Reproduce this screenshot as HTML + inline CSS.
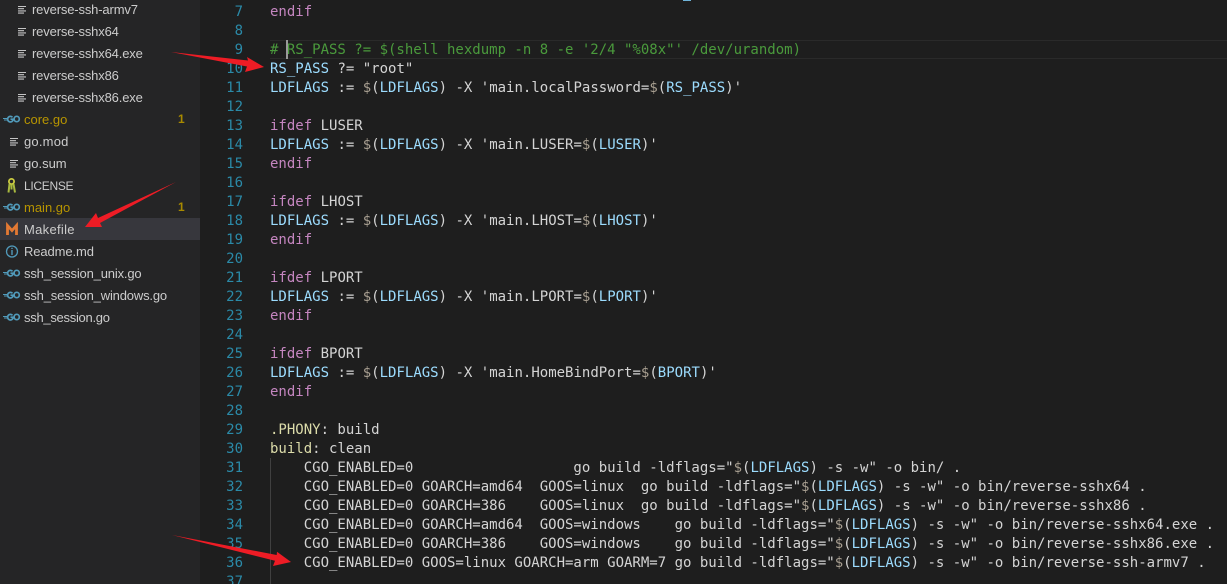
<!DOCTYPE html>
<html><head><meta charset="utf-8">
<style>
html,body{margin:0;padding:0;background:#1e1e1e;}
#root{position:relative;width:1227px;height:584px;overflow:hidden;background:#1e1e1e;}
#side{position:absolute;left:0;top:0;width:200px;height:584px;background:#252526;}
.row{position:absolute;left:0;width:200px;height:22px;font:13px/22px "Liberation Sans",sans-serif;color:#cccccc;white-space:pre;}
.row span.t{position:absolute;top:1px;}
.row.sel{background:#37373d;}
.y{color:#b89500 !important;}
.badge{position:absolute;left:178px;top:0;color:#a88a00;font-weight:bold;font-size:12px;}
.row svg{position:absolute;left:0;top:0;}
.ln{position:absolute;left:200px;width:43px;text-align:right;font:14px/19px "DejaVu Sans Mono",monospace;color:#2b8aa8;height:19px;margin-top:1px;}
.c{position:absolute;left:270px;font:14px/19px "DejaVu Sans Mono",monospace;color:#d4d4d4;white-space:pre;height:19px;margin-top:1px;}
.k{color:#c586c0}.v{color:#9cdcfe}.g{color:#a89f91}.cm{color:#4a9a3c}.f{color:#dcdcaa}
.r{letter-spacing:-.15px}.s{letter-spacing:-.17px}
</style></head><body><div id="root">
<div id="side">
<div class="row" style="top:-2px"><svg width="30" height="22"><path d="M18 8.500h8M18 10.700h6M18 12.900h8M18 15.100h6" stroke="#c5c5c5" stroke-width="1.1"/></svg><span class="t r" style="left:32px">reverse-ssh-armv7</span></div>
<div class="row" style="top:20px"><svg width="30" height="22"><path d="M18 8.500h8M18 10.700h6M18 12.900h8M18 15.100h6" stroke="#c5c5c5" stroke-width="1.1"/></svg><span class="t r" style="left:32px">reverse-sshx64</span></div>
<div class="row" style="top:42px"><svg width="30" height="22"><path d="M18 8.500h8M18 10.700h6M18 12.900h8M18 15.100h6" stroke="#c5c5c5" stroke-width="1.1"/></svg><span class="t r" style="left:32px">reverse-sshx64.exe</span></div>
<div class="row" style="top:64px"><svg width="30" height="22"><path d="M18 8.500h8M18 10.700h6M18 12.900h8M18 15.100h6" stroke="#c5c5c5" stroke-width="1.1"/></svg><span class="t r" style="left:32px">reverse-sshx86</span></div>
<div class="row" style="top:86px"><svg width="30" height="22"><path d="M18 8.500h8M18 10.700h6M18 12.900h8M18 15.100h6" stroke="#c5c5c5" stroke-width="1.1"/></svg><span class="t r" style="left:32px">reverse-sshx86.exe</span></div>
<div class="row" style="top:108px"><svg width="24" height="22"><path d="M3 10.500h4M4 12h3" stroke="#519aba" stroke-width="1"/><path d="M12.500 9.300A2.800 2.800 0 1 0 12.700 12.800V11.200H10.500" fill="none" stroke="#519aba" stroke-width="1.700"/><ellipse cx="16.700" cy="11" rx="2.600" ry="2.700" fill="none" stroke="#519aba" stroke-width="1.700"/></svg><span class="t y" style="left:24px">core.go</span><span class="badge">1</span></div>
<div class="row" style="top:130px"><svg width="30" height="22"><path d="M10 8.500h8M10 10.700h6M10 12.900h8M10 15.100h6" stroke="#c5c5c5" stroke-width="1.1"/></svg><span class="t" style="left:24px;letter-spacing:.2px">go.mod</span></div>
<div class="row" style="top:152px"><svg width="30" height="22"><path d="M10 8.500h8M10 10.700h6M10 12.900h8M10 15.100h6" stroke="#c5c5c5" stroke-width="1.1"/></svg><span class="t" style="left:24px">go.sum</span></div>
<div class="row" style="top:174px"><svg width="24" height="22"><circle cx="11.500" cy="7.500" r="2.600" fill="none" stroke="#cbcb41" stroke-width="1.800"/><path d="M9.500 10 8.500 18.500M13.500 10 15 18.500M11.500 10.500v5" stroke="#a9b93f" stroke-width="2"/></svg><span class="t" style="left:24px;font-size:12px;letter-spacing:-.3px">LICENSE</span></div>
<div class="row" style="top:196px"><svg width="24" height="22"><path d="M3 10.500h4M4 12h3" stroke="#519aba" stroke-width="1"/><path d="M12.500 9.300A2.800 2.800 0 1 0 12.700 12.800V11.200H10.500" fill="none" stroke="#519aba" stroke-width="1.700"/><ellipse cx="16.700" cy="11" rx="2.600" ry="2.700" fill="none" stroke="#519aba" stroke-width="1.700"/></svg><span class="t y" style="left:24px">main.go</span><span class="badge">1</span></div>
<div class="row sel" style="top:218px"><svg width="24" height="22"><path d="M7.500 17V7.500L12 12.500 16.500 7.500V17" fill="none" stroke="#e37933" stroke-width="2.800"/></svg><span class="t" style="left:24px;letter-spacing:.3px">Makefile</span></div>
<div class="row" style="top:240px"><svg width="24" height="22"><circle cx="12" cy="11.500" r="5.500" fill="none" stroke="#519aba" stroke-width="1.300"/><path d="M12 10V15M12 7.800v1.200" stroke="#519aba" stroke-width="1.400"/></svg><span class="t" style="left:24px;letter-spacing:-.1px">Readme.md</span></div>
<div class="row" style="top:262px"><svg width="24" height="22"><path d="M3 10.500h4M4 12h3" stroke="#519aba" stroke-width="1"/><path d="M12.500 9.300A2.800 2.800 0 1 0 12.700 12.800V11.200H10.500" fill="none" stroke="#519aba" stroke-width="1.700"/><ellipse cx="16.700" cy="11" rx="2.600" ry="2.700" fill="none" stroke="#519aba" stroke-width="1.700"/></svg><span class="t s" style="left:24px">ssh_session_unix.go</span></div>
<div class="row" style="top:284px"><svg width="24" height="22"><path d="M3 10.500h4M4 12h3" stroke="#519aba" stroke-width="1"/><path d="M12.500 9.300A2.800 2.800 0 1 0 12.700 12.800V11.200H10.500" fill="none" stroke="#519aba" stroke-width="1.700"/><ellipse cx="16.700" cy="11" rx="2.600" ry="2.700" fill="none" stroke="#519aba" stroke-width="1.700"/></svg><span class="t s" style="left:24px">ssh_session_windows.go</span></div>
<div class="row" style="top:306px"><svg width="24" height="22"><path d="M3 10.500h4M4 12h3" stroke="#519aba" stroke-width="1"/><path d="M12.500 9.300A2.800 2.800 0 1 0 12.700 12.800V11.200H10.500" fill="none" stroke="#519aba" stroke-width="1.700"/><ellipse cx="16.700" cy="11" rx="2.600" ry="2.700" fill="none" stroke="#519aba" stroke-width="1.700"/></svg><span class="t s" style="left:24px;letter-spacing:-.28px">ssh_session.go</span></div>
</div>

<div style="position:absolute;left:683px;top:0;width:8px;height:1px;background:#6fb3d8"></div>
<div style="position:absolute;left:270px;top:40px;width:957px;height:17px;border-top:1px solid #2a2a2a;border-bottom:1px solid #2a2a2a"></div>
<div style="position:absolute;left:270px;top:458px;width:1px;height:126px;background:#404040"></div>

<div class="ln" style="top:2px">7</div><div class="c k" style="top:2px">endif</div>
<div class="ln" style="top:21px">8</div>
<div class="ln" style="top:40px">9</div><div class="c cm" style="top:40px"># RS_PASS ?= $(shell hexdump -n 8 -e '2/4 "%08x"' /dev/urandom)</div>
<div class="ln" style="top:59px">10</div><div class="c" style="top:59px"><span class="v">RS_PASS</span> ?= "root"</div>
<div class="ln" style="top:78px">11</div><div class="c" style="top:78px"><span class="v">LDFLAGS</span> := <span class="g">$</span>(<span class="v">LDFLAGS</span>) -X 'main.localPassword=<span class="g">$</span>(<span class="v">RS_PASS</span>)'</div>
<div class="ln" style="top:97px">12</div>
<div class="ln" style="top:116px">13</div><div class="c" style="top:116px"><span class="k">ifdef</span> LUSER</div>
<div class="ln" style="top:135px">14</div><div class="c" style="top:135px"><span class="v">LDFLAGS</span> := <span class="g">$</span>(<span class="v">LDFLAGS</span>) -X 'main.LUSER=<span class="g">$</span>(<span class="v">LUSER</span>)'</div>
<div class="ln" style="top:154px">15</div><div class="c k" style="top:154px">endif</div>
<div class="ln" style="top:173px">16</div>
<div class="ln" style="top:192px">17</div><div class="c" style="top:192px"><span class="k">ifdef</span> LHOST</div>
<div class="ln" style="top:211px">18</div><div class="c" style="top:211px"><span class="v">LDFLAGS</span> := <span class="g">$</span>(<span class="v">LDFLAGS</span>) -X 'main.LHOST=<span class="g">$</span>(<span class="v">LHOST</span>)'</div>
<div class="ln" style="top:230px">19</div><div class="c k" style="top:230px">endif</div>
<div class="ln" style="top:249px">20</div>
<div class="ln" style="top:268px">21</div><div class="c" style="top:268px"><span class="k">ifdef</span> LPORT</div>
<div class="ln" style="top:287px">22</div><div class="c" style="top:287px"><span class="v">LDFLAGS</span> := <span class="g">$</span>(<span class="v">LDFLAGS</span>) -X 'main.LPORT=<span class="g">$</span>(<span class="v">LPORT</span>)'</div>
<div class="ln" style="top:306px">23</div><div class="c k" style="top:306px">endif</div>
<div class="ln" style="top:325px">24</div>
<div class="ln" style="top:344px">25</div><div class="c" style="top:344px"><span class="k">ifdef</span> BPORT</div>
<div class="ln" style="top:363px">26</div><div class="c" style="top:363px"><span class="v">LDFLAGS</span> := <span class="g">$</span>(<span class="v">LDFLAGS</span>) -X 'main.HomeBindPort=<span class="g">$</span>(<span class="v">BPORT</span>)'</div>
<div class="ln" style="top:382px">27</div><div class="c k" style="top:382px">endif</div>
<div class="ln" style="top:401px">28</div>
<div class="ln" style="top:420px">29</div><div class="c" style="top:420px"><span class="f">.PHONY</span>: build</div>
<div class="ln" style="top:439px">30</div><div class="c" style="top:439px"><span class="f">build</span>: clean</div>
<div class="ln" style="top:458px">31</div><div class="c" style="top:458px">    CGO_ENABLED=0                   go build -ldflags="<span class="g">$</span>(<span class="v">LDFLAGS</span>) -s -w" -o bin/ .</div>
<div class="ln" style="top:477px">32</div><div class="c" style="top:477px">    CGO_ENABLED=0 GOARCH=amd64  GOOS=linux  go build -ldflags="<span class="g">$</span>(<span class="v">LDFLAGS</span>) -s -w" -o bin/reverse-sshx64 .</div>
<div class="ln" style="top:496px">33</div><div class="c" style="top:496px">    CGO_ENABLED=0 GOARCH=386    GOOS=linux  go build -ldflags="<span class="g">$</span>(<span class="v">LDFLAGS</span>) -s -w" -o bin/reverse-sshx86 .</div>
<div class="ln" style="top:515px">34</div><div class="c" style="top:515px">    CGO_ENABLED=0 GOARCH=amd64  GOOS=windows    go build -ldflags="<span class="g">$</span>(<span class="v">LDFLAGS</span>) -s -w" -o bin/reverse-sshx64.exe .</div>
<div class="ln" style="top:534px">35</div><div class="c" style="top:534px">    CGO_ENABLED=0 GOARCH=386    GOOS=windows    go build -ldflags="<span class="g">$</span>(<span class="v">LDFLAGS</span>) -s -w" -o bin/reverse-sshx86.exe .</div>
<div class="ln" style="top:553px">36</div><div class="c" style="top:553px">    CGO_ENABLED=0 GOOS=linux GOARCH=arm GOARM=7 go build -ldflags="<span class="g">$</span>(<span class="v">LDFLAGS</span>) -s -w" -o bin/reverse-ssh-armv7 .</div>
<div class="ln" style="top:572px">37</div>

<div style="position:absolute;left:286px;top:40px;width:2px;height:19px;background:#9a9a9a"></div>

<svg width="1227" height="584" style="position:absolute;left:0;top:0">
<path d="M171 52 248 60.500 247 57 264 67 245 72 247 66.500Z" fill="#ee1c25"/>
<path d="M176 182 98 218 96 213 85 227 102 227 100 223Z" fill="#ee1c25"/>
<path d="M172 535 276.700 555 277 551.700 291 562 273 566 275 560.700Z" fill="#ee1c25"/>
</svg>
</div></body></html>
